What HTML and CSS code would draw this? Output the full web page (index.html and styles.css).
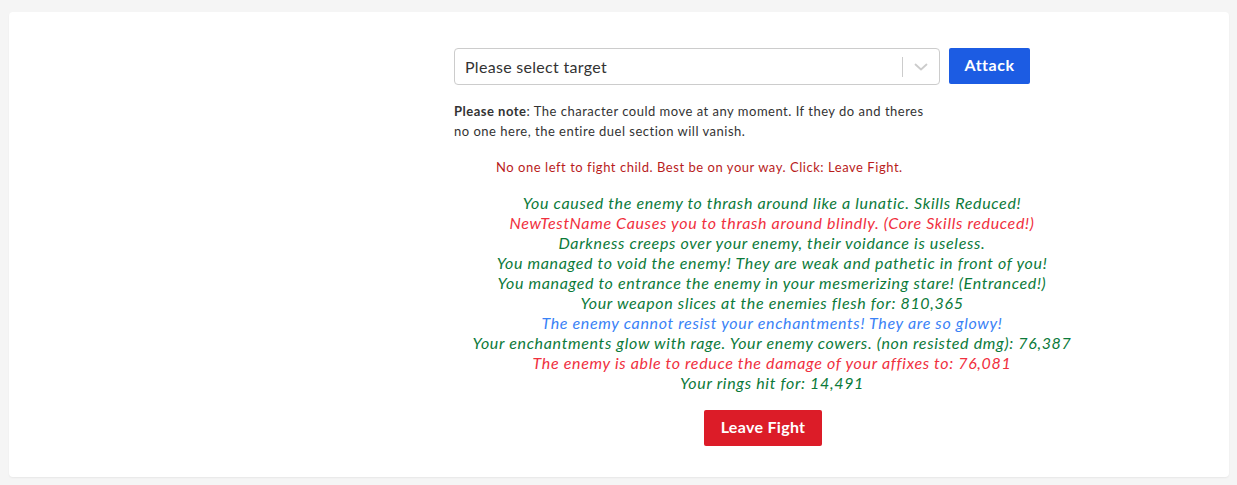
FILE: index.html
```html
<!DOCTYPE html>
<html>
<head>
<meta charset="utf-8">
<link rel="stylesheet" href="styles.css">
</head>
<body>
<div class="card">
  <div class="content">
    <div class="target-row">
      <div class="select">
        <span class="placeholder">Please select target</span>
        <span class="indicators">
          <span class="sep"></span>
          <svg class="chev" width="20" height="20" viewBox="0 0 20 20"><path d="M4.5 7.5 L10 12.5 L15.5 7.5" fill="none" stroke="#ccc" stroke-width="1.8" stroke-linecap="round" stroke-linejoin="round"/></svg>
        </span>
      </div>
      <button class="btn btn-attack">Attack</button>
    </div>
    <p class="note"><strong>Please note</strong>: The character could move at any moment. If they do and theres no one here, the entire duel section will vanish.</p>
    <p class="warning">No one left to fight child. Best be on your way. Click: Leave Fight.</p>
  </div>
  <div class="log">
    <div class="green">You caused the enemy to thrash around like a lunatic. Skills Reduced!</div>
    <div class="red">NewTestName Causes you to thrash around blindly. (Core Skills reduced!)</div>
    <div class="green">Darkness creeps over your enemy, their voidance is useless.</div>
    <div class="green">You managed to void the enemy! They are weak and pathetic in front of you!</div>
    <div class="green">You managed to entrance the enemy in your mesmerizing stare! (Entranced!)</div>
    <div class="green">Your weapon slices at the enemies flesh for: 810,365</div>
    <div class="blue">The enemy cannot resist your enchantments! They are so glowy!</div>
    <div class="green">Your enchantments glow with rage. Your enemy cowers. (non resisted dmg): 76,387</div>
    <div class="red">The enemy is able to reduce the damage of your affixes to: 76,081</div>
    <div class="green">Your rings hit for: 14,491</div>
  </div>
  <div class="leave-wrap">
    <button class="btn btn-leave">Leave Fight</button>
  </div>
</div>
</body>
</html>
```

FILE: styles.css
```css
html, body {
  margin: 0;
  padding: 0;
}
body {
  background: #f5f5f5;
  font-family: "Lato", "Noto Sans", sans-serif;
  color: #333;
}
.card {
  margin: 12px 8px 8px 9px;
  background: #fff;
  border-radius: 4px;
  box-shadow: 0 1px 2px rgba(0,0,0,0.06);
  padding: 36px 0 31px 0;
  height: 465px;
  box-sizing: border-box;
}
.content {
  margin-left: 445px;
  width: 576px;
}
.target-row {
  display: flex;
  gap: 9px;
  align-items: flex-start;
}
.select {
  flex: 1;
  height: 37px;
  box-sizing: border-box;
  border: 1px solid #ccc;
  border-radius: 4px;
  display: flex;
  align-items: center;
  padding-left: 10px;
}
.placeholder {
  flex: 1;
  font-size: 16px;
  letter-spacing: 0.3px;
  color: #333;
  padding-bottom: 1px;
}
.indicators {
  display: flex;
  align-items: center;
  height: 100%;
}
.sep {
  width: 1px;
  height: 20px;
  background: #ccc;
}
.chev {
  margin: 0 8px;
}
.btn {
  border: none;
  border-radius: 2px;
  color: #fff;
  font-family: "Lato", "Noto Sans", sans-serif;
  font-weight: 700;
  font-size: 16px;
  padding: 0 0 3px 0;
  cursor: pointer;
}
.btn-attack {
  background: #1c5ce3;
  width: 81px;
  height: 36px;
  letter-spacing: 0.5px;
}
.note {
  margin: 16px 0 0 0;
  font-size: 13px;
  line-height: 20px;
  letter-spacing: 0.5px;
  width: 480px;
  color: #333;
}
.note strong {
  color: #333;
}
.warning {
  margin: 16px 0 0 42px;
  font-size: 13px;
  line-height: 20px;
  letter-spacing: 0.54px;
  color: #b91c1c;
}
.log {
  margin: 16px 0 0 445px;
  width: 636px;
  text-align: center;
  font-style: italic;
  font-size: 16px;
  line-height: 20px;
  letter-spacing: 0.66px;
}
.green { color: #0c7a3a; }
.red { color: #f0303e; }
.blue { color: #3a82f6; }
.leave-wrap {
  margin: 17px 0 0 445px;
  width: 618px;
  display: flex;
  justify-content: center;
}
.btn-leave {
  background: #dc1c28;
  width: 118px;
  height: 36px;
  letter-spacing: 0.3px;
}
```
